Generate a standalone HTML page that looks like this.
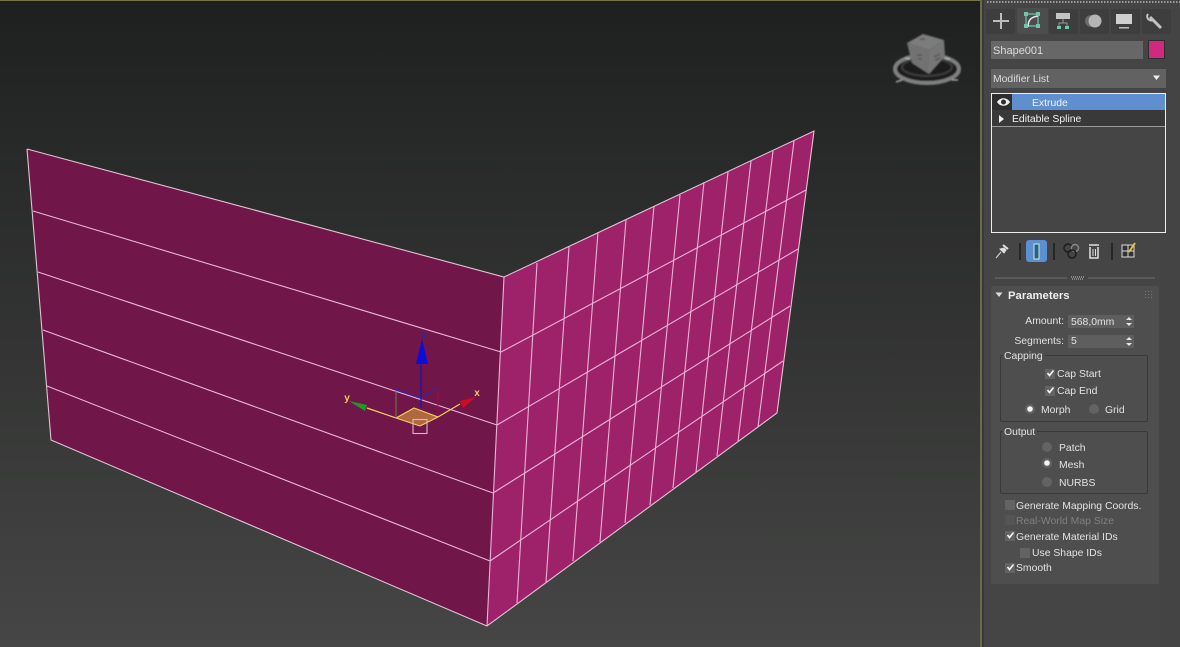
<!DOCTYPE html>
<html><head><meta charset="utf-8"><style>
html,body{margin:0;padding:0;background:#333}
#r{position:relative;width:1180px;height:647px;overflow:hidden;font-family:"Liberation Sans",sans-serif;font-size:10.4px;color:#e2e2e2;filter:blur(.3px)}
#r>*{position:absolute}
.t{white-space:nowrap;line-height:12px;margin-top:.5px}
.box{box-sizing:border-box}
</style></head><body><div id="r">
<svg width="1180" height="647" style="left:0;top:0" viewBox="0 0 1180 647">
<defs>
<linearGradient id="bg" x1="0" y1="0" x2="0" y2="1"><stop offset="0" stop-color="#1e1f1f"/><stop offset=".25" stop-color="#292a2a"/><stop offset=".62" stop-color="#363736"/><stop offset="1" stop-color="#454645"/></linearGradient>
<filter id="b"><feGaussianBlur stdDeviation=".3"/></filter>
<filter id="b2"><feGaussianBlur stdDeviation=".7"/></filter>
</defs>
<rect width="980" height="647" fill="url(#bg)"/>
<rect width="980" height="1" fill="#77734f"/>
<g filter="url(#b)">
<polygon points="27,149 504,277 487,626 51,440" fill="#701549"/>
<polygon points="504,277 814,131 777,413 487,626" fill="#9e206b"/>
<g fill="none" stroke="#eab4d6" stroke-width="1.1">
<polyline points="27,149 504,277 814,131 777,413 487,626 51,440 27,149" stroke="#e0c4d4"/>
<line x1="504" y1="277" x2="487" y2="626"/>
<line x1="33" y1="211" x2="501" y2="352"/>
<line x1="38" y1="272" x2="497" y2="425"/>
<line x1="43" y1="330" x2="493" y2="493"/>
<line x1="47" y1="386" x2="490" y2="561"/>
<line x1="501" y1="352" x2="806" y2="190"/>
<line x1="497" y1="425" x2="798" y2="249"/>
<line x1="493" y1="493" x2="790" y2="306"/>
<line x1="490" y1="561" x2="783" y2="361"/>
<line x1="537" y1="263" x2="517" y2="603"/>
<line x1="569" y1="247" x2="546" y2="582"/>
<line x1="598" y1="232" x2="573" y2="561"/>
<line x1="626" y1="220" x2="600" y2="542"/>
<line x1="654" y1="206" x2="625" y2="523"/>
<line x1="680" y1="195" x2="650" y2="505"/>
<line x1="704" y1="182" x2="673" y2="488"/>
<line x1="728" y1="172" x2="696" y2="472"/>
<line x1="751" y1="161" x2="717" y2="456"/>
<line x1="773" y1="151" x2="738" y2="441"/>
<line x1="794" y1="141" x2="758" y2="427"/>
</g>
</g>
<!-- gizmo -->
<g filter="url(#b)">
<polygon points="396,418 414,408 438,417 420,426" fill="#b0683f"/>
<polyline points="367,408 396,418 414,408 438,417 460,404" fill="none" stroke="#f4d060" stroke-width="1.2"/>
<line x1="396" y1="418" x2="420" y2="426" stroke="#f4d060" stroke-width="1"/>
<line x1="420" y1="426" x2="438" y2="417" stroke="#f4d060" stroke-width="1"/>
<line x1="396" y1="390" x2="396" y2="418" stroke="#7a7a50"/>
<line x1="396" y1="390" x2="421" y2="398" stroke="#2a2ac0"/>
<line x1="421" y1="398" x2="438" y2="388" stroke="#2a2ac0"/>
<line x1="438" y1="390" x2="438" y2="412" stroke="#a01040"/>
<line x1="421" y1="363" x2="421" y2="408" stroke="#1818c8" stroke-width="1.2"/>
<polygon points="422,339 416,364 428,364" fill="#0a0ad8"/>
<polygon points="349,401 367,405 365,411" fill="#1f9a22"/>
<polygon points="476,397 460,401 463,408" fill="#d0101c"/>
<rect x="413" y="419.500" width="14" height="14" fill="none" stroke="#d8b8c8" stroke-width="1.1"/>
</g>
<text x="424" y="337" font-family="Liberation Sans" font-size="9" font-weight="bold" fill="#2a2a9a" text-anchor="middle">z</text>
<text x="347" y="401" font-family="Liberation Sans" font-size="10" font-weight="bold" fill="#f0cc60" text-anchor="middle">y</text>
<text x="477" y="396" font-family="Liberation Sans" font-size="10" font-weight="bold" fill="#f0cc60" text-anchor="middle">x</text>
<!-- viewcube -->
<g filter="url(#b2)">
<ellipse cx="927" cy="69" rx="32" ry="14" fill="#1a1a1a" stroke="#7e807e" stroke-width="4"/>
<ellipse cx="927" cy="67" rx="25" ry="9" fill="none" stroke="#3c3c3c" stroke-width="2"/>
<polygon points="907,43 923,34 944,40 929,50" fill="#7c7c7c"/>
<polygon points="907,43 929,50 929,74 912,63" fill="#727272"/>
<polygon points="929,50 944,40 945,56 929,74" fill="#767676"/>
<path d="M917 55h5M918 59h4M934 57l6-3M935 60l5-2M920 39h5" stroke="#555" stroke-width="1.500" fill="none"/>
<path d="M896 82l6-2M952 80l6 0M905 58l5 1M945 58l5 1" stroke="#bbb" stroke-width="1.200"/>
</g>
<!-- panel -->
<rect x="980" width="200" height="647" fill="#444544"/>
<rect x="980" width="2" height="647" fill="#6d6a4a"/>
<rect x="982" width="2" height="647" fill="#393935"/>
<rect x="1160" y="0" width="20" height="647" fill="#434443"/>
<path d="M987 2H1180" stroke="#9a9a9a" stroke-width="2" stroke-dasharray="1.500 1.500"/>
<!-- tabs -->
<g fill="#3d3e3d"><rect x="986" y="9" width="29" height="25" rx="2"/><rect x="1049" y="9" width="29" height="25" rx="2"/><rect x="1080" y="9" width="29" height="25" rx="2"/><rect x="1111" y="9" width="29" height="25" rx="2"/><rect x="1142" y="9" width="29" height="25" rx="2"/></g>
<rect x="1017" y="8" width="31" height="26" rx="2" fill="#4c4d4c"/>
<path d="M1001 13V29M993 21H1009" stroke="#bdbdbd" stroke-width="2" fill="none"/>
<g filter="url(#b)">
<path d="M1026 14H1038V26H1026Z" stroke="#6ec7ac" stroke-width="1.200" fill="none"/>
<path d="M1028 27C1028 20 1031 17 1038 16" stroke="#e8e8e8" stroke-width="1.500" fill="none"/>
<g fill="#6ec7ac"><rect x="1024" y="12" width="4" height="4"/><rect x="1036" y="12" width="4" height="4"/><rect x="1024" y="24" width="4" height="4"/><rect x="1036" y="24" width="4" height="4"/></g>
<rect x="1056" y="13" width="14" height="6" fill="#c4c4c4"/>
<path d="M1063 19V23M1059 27V23H1067V27" stroke="#9a9a9a" fill="none"/>
<rect x="1057" y="26" width="4" height="3" fill="#6ec7ac"/><rect x="1065" y="26" width="4" height="3" fill="#6ec7ac"/>
<circle cx="1091" cy="21" r="6" fill="#6a6a6a"/><circle cx="1095" cy="21" r="6.500" fill="#b4b4b4"/>
<rect x="1116" y="14" width="16" height="10" fill="#cfcfcf"/><rect x="1119" y="27" width="10" height="1.500" fill="#bbb"/>
<path d="M1150 17L1161 28" stroke="#c4c4c4" stroke-width="3"/><path d="M1148 14A4 4 0 0 0 1153 20" stroke="#c4c4c4" stroke-width="2" fill="none"/>
</g>
</svg>

<div class="box" style="left:991px;top:41px;width:152px;height:18px;background:#676767"></div>
<div class="t" style="left:993px;top:44px;color:#dcdcdc;font-size:11px">Shape001</div>
<div class="box" style="left:1148px;top:40px;width:17px;height:19px;background:#d02a80;border:1px solid #2e2e2e"></div>
<div class="box" style="left:991px;top:69px;width:175px;height:19px;background:#626262"></div>
<div class="t" style="left:993px;top:73px;color:#dcdcdc">Modifier List</div>
<svg style="left:1152px;top:75px" width="9" height="6"><polygon points="1,0.500 8,0.500 4.500,5" fill="#eee"/></svg>

<div class="box" style="left:991px;top:93px;width:175px;height:140px;border:1px solid #eee;background:#454545"></div>
<div style="left:992px;top:94px;width:20px;height:16px;background:#2e2e2e"></div>
<div style="left:1012px;top:94px;width:153px;height:16px;background:#5f8fcf"></div>
<div style="left:992px;top:110px;width:173px;height:17px;background:#393939;border-bottom:1px solid #999;box-sizing:border-box"></div>
<div class="t" style="left:1032px;top:97px;color:#f2f2f2">Extrude</div>
<div class="t" style="left:1012px;top:113px;color:#f2f2f2">Editable Spline</div>
<svg style="left:996px;top:96px" width="16" height="12"><path d="M1 6C4 1 11 1 14 6C11 11 4 11 1 6Z" fill="#eee"/><circle cx="7.500" cy="6" r="2.500" fill="#2e2e2e"/></svg>
<svg style="left:998px;top:114px" width="8" height="10"><polygon points="1,1 6,5 1,9" fill="#eee"/></svg>

<svg style="left:985px;top:236px" width="170" height="50" viewBox="985 236 170 50">
<g filter="url(#b)">
<path d="M996 258L1001 252" stroke="#ccc" stroke-width="1.200"/>
<path d="M1000 249L1004 253L1006 250L1004 248Z" fill="#ddd" stroke="#ddd"/>
<path d="M1003 245L1008 249" stroke="#ddd" stroke-width="2"/>
<path d="M1020 243V260M1054 243V260M1112 243V260" stroke="#151515" stroke-width="1.200"/>
<rect x="1026" y="240" width="21" height="22" rx="3" fill="#5c90d0"/>
<rect x="1034" y="244" width="5" height="15" fill="#2e5f80" stroke="#c4ecec"/>
<circle cx="1068" cy="248" r="4" fill="none" stroke="#1e1e1e" stroke-width="1.500"/><circle cx="1075" cy="248" r="3.500" fill="none" stroke="#888" stroke-width="1.500"/><circle cx="1072" cy="254" r="4" fill="none" stroke="#1e1e1e" stroke-width="1.500"/>
<path d="M1090 247V258H1098V247M1089 245H1099" stroke="#ddd" stroke-width="1.500" fill="none"/><path d="M1093 249V256M1095.500 249V256" stroke="#ddd"/>
<rect x="1122" y="245" width="12" height="12" fill="#333" stroke="#ddd"/><path d="M1122 251H1134M1128 245V257" stroke="#ddd"/><path d="M1129 252L1135 243" stroke="#e8c040" stroke-width="2"/>
<path d="M995 278H1067M1088 278H1161" stroke="#707070"/>
<path d="M1071 277H1084M1072 279H1083" stroke="#ccc" stroke-dasharray="1 1"/>
</g></svg>

<div class="box" style="left:991px;top:286px;width:168px;height:298px;background:#4e4e4e;border-radius:2px"></div>
<svg style="left:995px;top:292px" width="9" height="7"><polygon points="0.500,0.500 7.500,0.500 4,5" fill="#ddd"/></svg>
<div class="t" style="left:1008px;top:289px;font-weight:bold;color:#eee;font-size:11.3px">Parameters</div>
<svg style="left:1145px;top:291px" width="8" height="9"><g fill="#777"><rect x="0" y="0" width="1" height="1"/><rect x="3" y="0" width="1" height="1"/><rect x="6" y="0" width="1" height="1"/><rect x="0" y="3" width="1" height="1"/><rect x="3" y="3" width="1" height="1"/><rect x="6" y="3" width="1" height="1"/><rect x="0" y="6" width="1" height="1"/><rect x="3" y="6" width="1" height="1"/><rect x="6" y="6" width="1" height="1"/></g></svg>

<div class="t" style="left:1000px;top:315px;width:64px;text-align:right">Amount:</div>
<div class="box" style="left:1068px;top:315px;width:66px;height:13px;background:#5e5e5e"></div>
<div class="t" style="left:1071px;top:316px">568,0mm</div>
<div class="t" style="left:1000px;top:335px;width:64px;text-align:right">Segments:</div>
<div class="box" style="left:1068px;top:335px;width:66px;height:13px;background:#5e5e5e"></div>
<div class="t" style="left:1071px;top:335px">5</div>
<svg style="left:1125px;top:316px" width="8" height="32"><g fill="#e4e4e4"><polygon points="1,4 4,1 7,4"/><polygon points="1,7 4,10 7,7"/><polygon points="1,24 4,21 7,24"/><polygon points="1,27 4,30 7,27"/></g></svg>

<div class="box" style="left:1000px;top:355px;width:148px;height:67px;border:1px solid #393939;border-radius:2px"></div>
<div class="t" style="left:1003px;top:350px;padding:0 2px 0 1px;background:#4e4e4e">Capping</div>
<div class="box" style="left:1000px;top:431px;width:148px;height:63px;border:1px solid #393939;border-radius:2px"></div>
<div class="t" style="left:1003px;top:426px;padding:0 2px 0 1px;background:#4e4e4e">Output</div>

<svg style="left:990px;top:360px" width="165" height="220" viewBox="990 360 165 220">
<g fill="#636363">
<rect x="1045" y="369" width="10" height="10"/><rect x="1045" y="386" width="10" height="10"/>
<rect x="1005" y="500" width="10" height="10"/><rect x="1005" y="515" width="10" height="10" fill="#555"/><rect x="1005" y="531" width="10" height="10"/><rect x="1020" y="548" width="10" height="10"/><rect x="1005" y="563" width="10" height="10"/>
<circle cx="1030" cy="409" r="5"/><circle cx="1094" cy="409" r="5"/><circle cx="1047" cy="447" r="5"/><circle cx="1047" cy="463" r="5"/><circle cx="1047" cy="482" r="5"/>
</g>
<g fill="none" stroke="#f2f2f2" stroke-width="1.700">
<path d="M1047.500 373L1049.500 375.500L1053.500 370.500M1047.500 390L1049.500 392.500L1053.500 387.500M1007.500 535L1009.500 537.500L1013.500 532.500M1007.500 567L1009.500 569.500L1013.500 564.500"/>
</g>
<circle cx="1030" cy="409" r="2.800" fill="#f2f2f2"/><circle cx="1047" cy="463" r="2.800" fill="#f2f2f2"/>
</svg>

<div class="t" style="left:1057px;top:368px">Cap Start</div>
<div class="t" style="left:1057px;top:385px">Cap End</div>
<div class="t" style="left:1041px;top:404px">Morph</div>
<div class="t" style="left:1105px;top:404px">Grid</div>
<div class="t" style="left:1059px;top:442px">Patch</div>
<div class="t" style="left:1059px;top:459px">Mesh</div>
<div class="t" style="left:1059px;top:477px">NURBS</div>
<div class="t" style="left:1016px;top:500px">Generate Mapping Coords.</div>
<div class="t" style="left:1016px;top:515px;color:#808080">Real-World Map Size</div>
<div class="t" style="left:1016px;top:531px">Generate Material IDs</div>
<div class="t" style="left:1032px;top:547px">Use Shape IDs</div>
<div class="t" style="left:1016px;top:562px">Smooth</div>
</div></body></html>
